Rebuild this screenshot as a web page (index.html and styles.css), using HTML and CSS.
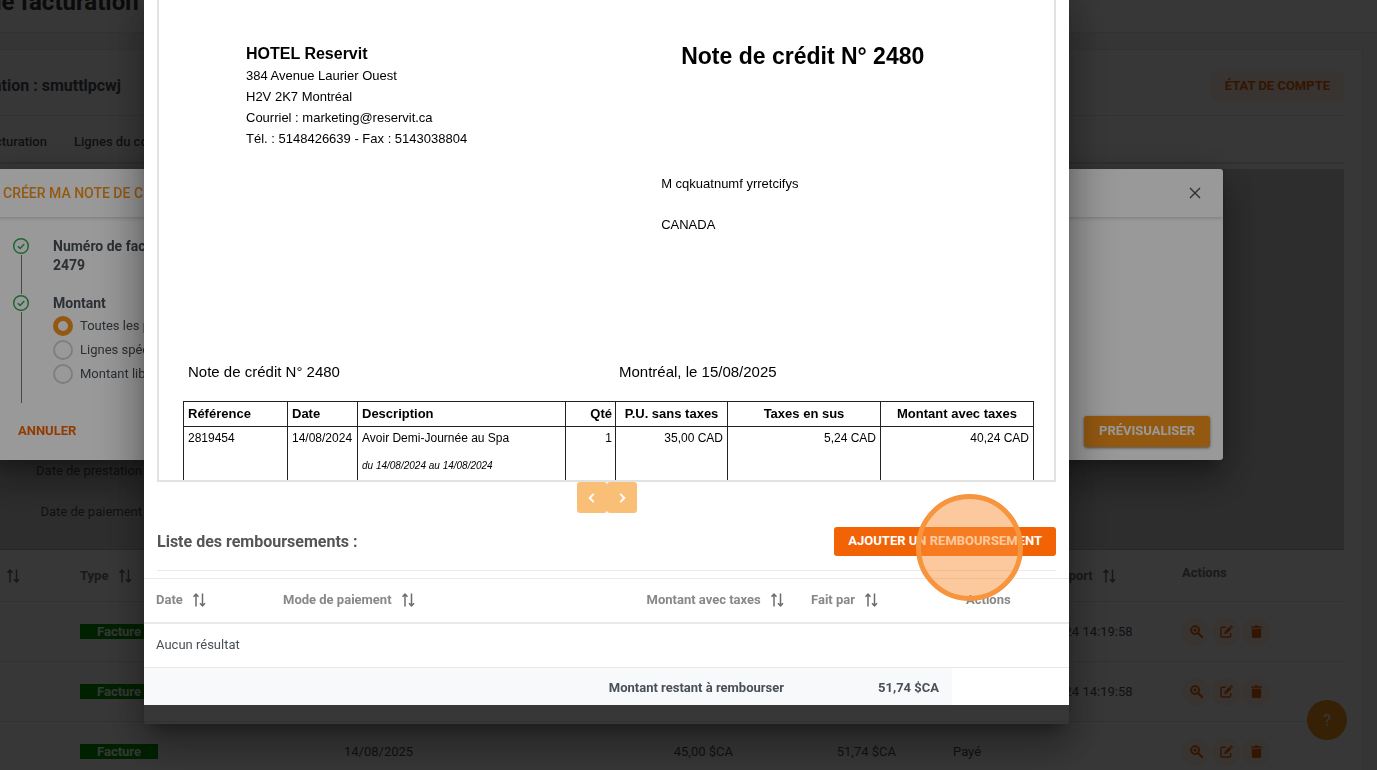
FILE: index.html
```html
<!DOCTYPE html>
<html lang="fr">
<head>
    <meta charset="UTF-8">
    <meta name="viewport" content="width=device-width, initial-scale=1.0">
    <title>Note de crédit</title>
    <link rel="stylesheet" href="styles.css">
</head>
<body>
    <!-- shared icons -->
    <svg class="defs" aria-hidden="true">
        <symbol id="i-sort" viewBox="0 0 14 14"><path d="M4 13.500V1.500M1.500 3.800 4 1.200l2.500 2.600M10.500 .5v12M8 10.200l2.500 2.600 2.500-2.600" fill="none" stroke="currentColor" stroke-width="1.500"/></symbol>
        <symbol id="i-zoom" viewBox="0 0 14 14"><circle cx="5.500" cy="5.500" r="4.300" fill="none" stroke="currentColor" stroke-width="2"/><path d="M8.800 8.800 13 13" stroke="currentColor" stroke-width="2.400" stroke-linecap="round"/><path d="M5.500 3.500v4M3.500 5.500h4" stroke="currentColor" stroke-width="1.200"/></symbol>
        <symbol id="i-edit" viewBox="0 0 14 14"><path d="M6 2.500H2.500Q1 2.500 1 4v7.500Q1 13 2.500 13H10q1.500 0 1.500-1.500V8.500" fill="none" stroke="currentColor" stroke-width="1.600"/><path d="m4.500 9.800.6-2.900 5-5 2.300 2.300-5 5zM10.700 1.300l.7-.7q.5-.5 1 0l1.200 1.200q.5.500 0 1l-.7.7z" fill="currentColor"/></symbol>
        <symbol id="i-trash" viewBox="0 0 14 14"><path d="M1 1.500h3.500L5.200.5h3.600l.7 1H13V3H1zM2 4h10v8.500q0 1.500-1.500 1.500h-7Q2 14 2 12.500z" fill="currentColor"/></symbol>
        <symbol id="i-check" viewBox="0 0 18 18"><circle cx="9" cy="9" r="7.300" fill="none" stroke="currentColor" stroke-width="1.500"/><path d="m5.800 9.200 2.300 2.200 4.200-4.400" fill="none" stroke="currentColor" stroke-width="1.500"/></symbol>
    </svg>

    <div class="page">
        <header class="page-top"><h1>de facturation</h1></header>
        <main class="card">
            <div class="card-head">
                <h2>ation : smuttlpcwj</h2>
                <button class="btn btn-soft">ÉTAT DE COMPTE</button>
            </div>
            <nav class="tabs">
                <a href="#">cturation</a>
                <a href="#">Lignes du compte</a>
            </nav>
            <div class="filters">
                <span>Date de prestation</span>
                <span>Date de paiement</span>
            </div>
            <table class="invoices">
                <colgroup><col class="i1"><col class="i2"><col class="i3"><col class="i4"><col class="i5"><col class="i6"><col class="i7"><col></colgroup>
                <thead>
                    <tr>
                        <th><svg class="sort"><use href="#i-sort"/></svg></th>
                        <th>Type <svg class="sort"><use href="#i-sort"/></svg></th>
                        <th></th><th></th><th></th><th></th>
                        <th class="export">Export <svg class="sort"><use href="#i-sort"/></svg></th>
                        <th class="act-head">Actions</th>
                    </tr>
                </thead>
                <tbody>
                    <tr>
                        <td></td><td><span class="tag">Facture</span></td><td></td><td></td><td></td><td></td>
                        <td class="stamp">14/08/2024 14:19:58</td>
                        <td><div class="acts">
                            <button aria-label="Voir"><svg><use href="#i-zoom"/></svg></button>
                            <button aria-label="Modifier"><svg><use href="#i-edit"/></svg></button>
                            <button aria-label="Supprimer"><svg><use href="#i-trash"/></svg></button>
                        </div></td>
                    </tr>
                    <tr>
                        <td></td><td><span class="tag">Facture</span></td><td></td><td></td><td></td><td></td>
                        <td class="stamp">14/08/2024 14:19:58</td>
                        <td><div class="acts">
                            <button aria-label="Voir"><svg><use href="#i-zoom"/></svg></button>
                            <button aria-label="Modifier"><svg><use href="#i-edit"/></svg></button>
                            <button aria-label="Supprimer"><svg><use href="#i-trash"/></svg></button>
                        </div></td>
                    </tr>
                    <tr>
                        <td></td><td><span class="tag">Facture</span></td><td>14/08/2025</td>
                        <td class="num">45,00 $CA</td><td class="num">51,74 $CA</td><td class="state">Payé</td><td></td>
                        <td><div class="acts">
                            <button aria-label="Voir"><svg><use href="#i-zoom"/></svg></button>
                            <button aria-label="Modifier"><svg><use href="#i-edit"/></svg></button>
                            <button aria-label="Supprimer"><svg><use href="#i-trash"/></svg></button>
                        </div></td>
                    </tr>
                </tbody>
            </table>
        </main>
        <button class="help">?</button>
    </div>

    <div class="overlay overlay-page">
        <section class="dialog create">
            <div class="create-head">
                <h2>CRÉER MA NOTE DE CRÉDIT</h2>
                <button class="close" aria-label="Fermer"><svg viewBox="0 0 12 12"><path d="M1 1l10 10M11 1 1 11" stroke="currentColor" stroke-width="1.400"/></svg></button>
            </div>
            <div class="create-body">
                <div class="step">
                    <div class="rail"><svg><use href="#i-check"/></svg></div>
                    <div><b>Numéro de facture</b><b>2479</b></div>
                </div>
                <div class="step last">
                    <div class="rail"><svg><use href="#i-check"/></svg></div>
                    <div>
                        <b>Montant</b>
                        <label><input type="radio" name="amount" checked> Toutes les prestations</label>
                        <label><input type="radio" name="amount"> Lignes spécifiques</label>
                        <label><input type="radio" name="amount"> Montant libre</label>
                    </div>
                </div>
            </div>
            <div class="create-foot">
                <button class="btn btn-text">ANNULER</button>
                <button class="btn btn-amber">PRÉVISUALISER</button>
            </div>
        </section>
    </div>

    <div class="overlay overlay-top">
        <section class="dialog preview">
            <div class="preview-body">
                <div class="sheet">
                    <div class="sheet-top">
                        <address>
                            <strong>HOTEL Reservit</strong>
                            384 Avenue Laurier Ouest<br>
                            H2V 2K7 Montréal<br>
                            Courriel : marketing@reservit.ca<br>
                            Tél. : 5148426639 - Fax : 5143038804
                        </address>
                        <div class="client">
                            <h2>Note de crédit N° 2480</h2>
                            <p>M cqkuatnumf yrretcifys</p>
                            <p>CANADA</p>
                        </div>
                    </div>
                    <div class="sheet-ref">
                        <span>Note de crédit N° 2480</span>
                        <span>Montréal, le 15/08/2025</span>
                    </div>
                    <table class="lines">
                        <colgroup><col class="l1"><col class="l2"><col class="l3"><col class="l4"><col class="l5"><col class="l6"><col class="l7"></colgroup>
                        <thead>
                            <tr><th>Référence</th><th>Date</th><th>Description</th><th class="num">Qté</th><th class="mid">P.U. sans taxes</th><th class="mid">Taxes en sus</th><th class="mid">Montant avec taxes</th></tr>
                        </thead>
                        <tbody>
                            <tr><td>2819454</td><td>14/08/2024</td><td>Avoir Demi-Journée au Spa<em>du 14/08/2024 au 14/08/2024</em></td><td class="num">1</td><td class="num">35,00 CAD</td><td class="num">5,24 CAD</td><td class="num">40,24 CAD</td></tr>
                        </tbody>
                    </table>
                </div>
                <div class="pager">
                    <button aria-label="Page précédente"><svg viewBox="0 0 12 12"><path d="M7.500 2.500 4 6l3.500 3.500" fill="none" stroke="currentColor" stroke-width="1.600"/></svg></button>
                    <button aria-label="Page suivante"><svg viewBox="0 0 12 12"><path d="M4.500 2.500 8 6 4.500 9.500" fill="none" stroke="currentColor" stroke-width="1.600"/></svg></button>
                </div>
                <div class="refund-head">
                    <h3>Liste des remboursements :</h3>
                    <div class="target">
                        <button class="btn btn-orange">AJOUTER UN REMBOURSEMENT</button>
                        <span class="marker"></span>
                    </div>
                </div>
                <table class="refunds">
                    <colgroup><col class="r1"><col class="r2"><col class="r3"><col class="r4"><col class="r5"></colgroup>
                    <thead>
                        <tr>
                            <th>Date <svg class="sort"><use href="#i-sort"/></svg></th>
                            <th>Mode de paiement <svg class="sort"><use href="#i-sort"/></svg></th>
                            <th class="num">Montant avec taxes <svg class="sort"><use href="#i-sort"/></svg></th>
                            <th>Fait par <svg class="sort"><use href="#i-sort"/></svg></th>
                            <th>Actions</th>
                        </tr>
                    </thead>
                    <tbody>
                        <tr><td colspan="5">Aucun résultat</td></tr>
                    </tbody>
                    <tfoot>
                        <tr><td class="num" colspan="3">Montant restant à rembourser</td><td class="num">51,74 $CA</td><td class="blank"></td></tr>
                    </tfoot>
                </table>
            </div>
        </section>
    </div>
</body>
</html>
```

FILE: styles.css
```css
*{
    box-sizing: border-box;
}
body{
    margin: 0;
    height: 100vh;
    overflow: hidden;
    background: #f5f5f5;
    color: #495057;
    font-family: Roboto, sans-serif;
    font-size: 13px;
    line-height: 20px;
}
h1, h2, h3, p{
    margin: 0;
}
button{
    font-family: inherit;
    border: 0;
    padding: 0;
}
table{
    width: 100%;
    border-collapse: separate;
    border-spacing: 0;
    table-layout: fixed;
}
th, td{
    text-align: left;
    padding: 0 13px;
}
.num{
    text-align: right;
}
.mid{
    text-align: center;
}
.defs{
    display: none;
}
.sort{
    width: 14px;
    height: 14px;
    margin-left: 6px;
    vertical-align: -3px;
    color: #6c6c6c;
}
.btn{
    border-radius: 3px;
    font-size: 13px;
    font-weight: 700;
    padding: 0 14px;
}

/* page */
.page{
    height: 100vh;
    overflow: hidden;
}
.page-top{
    display: flow-root;
    height: 33px;
    background: #fff;
    border-bottom: 1px solid #e8e8e8;
}
.page-top h1{
    color: #333;
    font-size: 24px;
    line-height: 28px;
    margin: -12px 0 0 -12px;
}
.card{
    background: #fff;
    border: 1px solid #e8e8e8;
    border-left: 0;
    margin: 16px 14px 0 0;
    padding-right: 18px;
}
.card-head{
    display: flex;
    align-items: center;
    justify-content: space-between;
    height: 66px;
    padding-top: 6px;
    border-bottom: 1px solid #e8e8e8;
}
.card-head h2{
    font-size: 16px;
    margin-left: -7px;
}
.btn-soft{
    height: 30px;
    background: #fff0e4;
    color: #f26305;
}
.tabs{
    display: flex;
    gap: 27px;
    padding: 16px 0 10px;
    margin-left: -5px;
    border-bottom: 2px solid #dee2e6;
}
.tabs a{
    color: #495057;
    font-weight: 500;
    text-decoration: none;
}
.filters{
    display: flex;
    flex-direction: column;
    justify-content: flex-end;
    gap: 21px;
    height: 381px;
    margin-top: 5px;
    padding-bottom: 27px;
    background: #d0d0d0;
    border-bottom: 1px solid #bbb;
}
.filters span{
    width: 142px;
    text-align: right;
}
.invoices th{
    height: 52px;
    color: #777;
    font-weight: 700;
    border-bottom: 1px solid #e4e4e4;
}
.invoices td{
    height: 60px;
    border-bottom: 1px solid #e4e4e4;
}
.invoices th:first-child{
    padding-left: 0;
}
.invoices .act-head{
    padding-bottom: 6px;
}
.i1{ width: 67px; }
.i2{ width: 264px; }
.i3{ width: 250px; }
.i4{ width: 165px; }
.i5{ width: 163px; }
.i6{ width: 91px; }
.i7{ width: 169px; }
.invoices .export{
    text-align: right;
    padding-right: 53px;
}
.invoices .state{
    padding-left: 44px;
    white-space: nowrap;
}
.invoices .stamp{
    padding-left: 10px;
}
.tag{
    display: block;
    width: 78px;
    background: #090;
    color: #fff;
    font-weight: 700;
    line-height: 15px;
    text-align: center;
}
.acts{
    display: flex;
    gap: 2px;
}
.acts button{
    width: 28px;
    height: 28px;
    border-radius: 50%;
    background: #fff0e4;
    color: #f26305;
    display: grid;
    place-items: center;
}
.acts svg{
    width: 13px;
    height: 13px;
}
.help{
    position: absolute;
    right: 30px;
    bottom: 30px;
    width: 40px;
    height: 40px;
    border-radius: 50%;
    background: #f7941d;
    color: #fff;
    font-size: 16px;
}

/* dialogs */
.overlay{
    position: fixed;
    inset: 0;
    overflow: hidden;
}
.overlay-page{
    background: rgba(0, 0, 0, .64);
}
.overlay-top{
    background: rgba(0, 0, 0, .4);
}
.dialog{
    position: absolute;
    border-radius: 3px;
    box-shadow: 0 11px 15px -7px rgba(0, 0, 0, .3), 0 24px 38px 3px rgba(0, 0, 0, .2), 0 9px 46px 8px rgba(0, 0, 0, .2);
}
.create{
    top: 169px;
    left: -10px;
    right: 154px;
    background: #fff;
}
.create-head{
    display: flex;
    align-items: center;
    justify-content: space-between;
    height: 48px;
    padding: 0 22px 0 13px;
    box-shadow: 0 1px 4px rgba(0, 0, 0, .2);
}
.create-head h2{
    color: #f7941d;
    font-size: 14px;
    font-weight: 500;
}
.close{
    background: none;
    width: 12px;
    height: 12px;
    color: #495057;
}
.close svg{
    display: block;
    width: 12px;
}
.create-body{
    padding: 20px 22px 0;
}
.step{
    display: flex;
    gap: 23px;
    height: 57px;
}
.step.last{
    height: 109px;
}
.rail{
    display: flex;
    flex-direction: column;
    align-items: center;
    width: 18px;
    color: #35a853;
}
.rail svg{
    width: 18px;
    height: 18px;
    flex: none;
}
.rail::after{
    content: "";
    flex: 1;
    width: 1px;
    background: #777;
}
.step b{
    display: block;
    font-size: 14px;
    line-height: 19px;
}
.step label{
    display: flex;
    align-items: center;
    gap: 7px;
    height: 24px;
}
.step b + label{
    margin-top: 1px;
}
.step input{
    appearance: none;
    width: 20px;
    height: 20px;
    margin: 0;
    border: 2px solid #ced4da;
    border-radius: 50%;
}
.step input:checked{
    border: 5px solid #f7941d;
}
.create-foot{
    display: flex;
    justify-content: space-between;
    padding: 13px;
}
.btn-text{
    background: none;
    color: #f26305;
    padding: 0 15px 2px;
}
.btn-amber{
    height: 31px;
    padding: 0 15px 2px;
    background: #f7941d;
    color: #fff;
    box-shadow: 0 1px 3px rgba(0, 0, 0, .5);
}

.preview{
    top: -10px;
    left: 144px;
    right: 308px;
    padding-bottom: 19px;
}
.preview-body{
    background: #fff;
    border-radius: 3px;
    padding-top: 10px;
}
.sheet{
    height: 482px;
    margin: 0 13px;
    padding: 0 20px 0 24px;
    overflow: hidden;
    border: 2px solid #e2e2e2;
    border-top: 0;
    color: #000;
    font-family: "Liberation Sans", sans-serif;
}
.sheet-top{
    display: flex;
    gap: 194px;
    height: 362px;
    padding: 43px 0 0 63px;
}
address{
    font-style: normal;
    line-height: 21px;
    white-space: nowrap;
}
address strong{
    display: block;
    font-size: 16px;
    line-height: 22px;
}
.client h2{
    font-size: 23px;
    line-height: 26px;
    margin: 0 0 104px 20px;
    white-space: nowrap;
}
.client p{
    line-height: 21px;
    margin-bottom: 20px;
}
.sheet-ref{
    display: grid;
    grid-template-columns: 431px 1fr;
    height: 39px;
    padding-left: 5px;
    font-size: 15px;
}
.lines{
    border-left: 1px solid #222;
    border-top: 1px solid #222;
}
.lines th, .lines td{
    border-right: 1px solid #222;
    padding: 0 4px;
    white-space: nowrap;
}
.lines th{
    height: 25px;
    border-bottom: 1px solid #222;
}
.lines th.num, .lines td.num:nth-child(4){
    padding-right: 3px;
}
.lines td{
    height: 90px;
    padding-top: 1px;
    font-size: 12px;
    vertical-align: top;
}
.lines em{
    display: block;
    font-size: 10px;
    margin-top: 8px;
}
.l1{ width: 104px; }
.l2{ width: 70px; }
.l3{ width: 208px; }
.l4{ width: 50px; }
.l5{ width: 112px; }
.l6{ width: 153px; }
.pager{
    display: flex;
    justify-content: center;
}
.pager button{
    display: grid;
    place-items: center;
    width: 30px;
    height: 31px;
    border-radius: 3px;
    background: #fabf77;
    color: #fff;
}
.pager svg{
    width: 14px;
}
.refund-head{
    display: flex;
    align-items: center;
    justify-content: space-between;
    height: 58px;
    margin: 0 13px;
    border-bottom: 1px solid #e9e9e9;
}
.refund-head h3{
    color: #555;
    font-size: 16px;
}
.target{
    position: relative;
}
.btn-orange{
    display: block;
    height: 29px;
    padding-bottom: 2px;
    background: #f26305;
    color: #fff;
}
.marker{
    position: absolute;
    right: 33px;
    top: -33px;
    width: 107px;
    height: 107px;
    border: 5px solid #f7943e;
    border-radius: 50%;
    background: rgba(249, 148, 61, .5);
    z-index: 1;
}
.refunds{
    margin-top: 7px;
    border-top: 1px solid #e9e9e9;
}
.refunds th, .refunds tbody td{
    padding: 0 12px 2px;
}
.refunds th{
    height: 45px;
    color: #888;
    border-bottom: 2px solid #e9e9e9;
}
.refunds tbody td{
    height: 44px;
    border-bottom: 1px solid #e9e9e9;
}
.refunds th.num{
    padding-right: 13px;
}
.refunds th:nth-child(n+4){
    padding-left: 14px;
}
.refunds tfoot td{
    height: 37px;
    padding-top: 2px;
    background: #f8f9fb;
    font-weight: 700;
}
.refunds tfoot .blank{
    background: #fff;
}
.r1{ width: 127px; }
.r2{ width: 250px; }
.r3{ width: 276px; }
.r4{ width: 155px; }
```
